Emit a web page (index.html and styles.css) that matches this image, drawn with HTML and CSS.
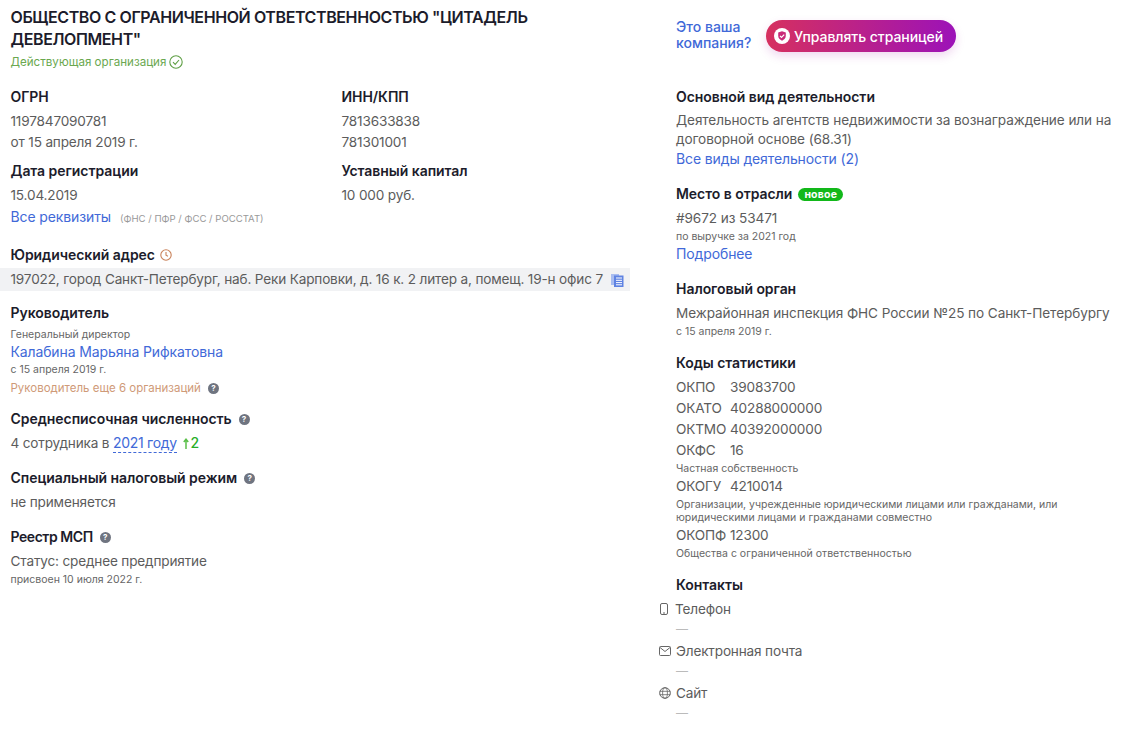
FILE: index.html
```html
<!DOCTYPE html>
<html lang="ru">
<head>
<meta charset="utf-8">
<title>Цитадель Девелопмент</title>
<link rel="stylesheet" href="styles.css">
</head>
<body>
<div class="page">
  <main class="left">
    <h1 class="title">ОБЩЕСТВО С ОГРАНИЧЕННОЙ ОТВЕТСТВЕННОСТЬЮ "ЦИТАДЕЛЬ ДЕВЕЛОПМЕНТ"</h1>
    <div class="status">Действующая организация
      <svg class="ic-check" viewBox="0 0 14 14" width="14" height="14"><circle cx="7" cy="7" r="6.200" fill="none" stroke="#5f9f45" stroke-width="1.100"/><path d="M4 7.200l2.200 2.200 3.800-4.400" fill="none" stroke="#5f9f45" stroke-width="1.100"/></svg>
    </div>
    <div class="req-grid">
      <div class="req">
        <div class="h">ОГРН</div>
        <div class="v">1197847090781</div>
        <div class="v">от 15 апреля 2019 г.</div>
      </div>
      <div class="req">
        <div class="h">ИНН/КПП</div>
        <div class="v">7813633838</div>
        <div class="v">781301001</div>
      </div>
      <div class="req">
        <div class="h">Дата регистрации</div>
        <div class="v">15.04.2019</div>
      </div>
      <div class="req">
        <div class="h">Уставный капитал</div>
        <div class="v">10 000 руб.</div>
      </div>
    </div>
    <div class="v"><a class="link" href="#">Все реквизиты</a><span class="src">(ФНС / ПФР / ФСС / РОССТАТ)</span></div>

    <section class="sec sec-addr">
      <div class="h">Юридический адрес
        <svg class="ic-clock" viewBox="0 0 12 12" width="12" height="12"><circle cx="6" cy="6" r="5.200" fill="none" stroke="#c9825a" stroke-width="1.100"/><path d="M6 3v3.200l2 1" fill="none" stroke="#c9825a" stroke-width="1.100"/></svg>
      </div>
      <div class="addr"><span class="addr-text">197022, город Санкт-Петербург, наб. Реки Карповки, д. 16 к. 2 литер а, помещ. 19-н офис 7</span>
        <svg class="ic-copy" viewBox="0 0 13 14" width="13" height="14"><path d="M0 1h8v11H0z" fill="#a9bdf0"/><path d="M3 2.500h9.500V14H3z" fill="#5f83e2"/><path d="M5 5h6M5 7.300h6M5 9.600h6M5 11.800h6" stroke="#fff" stroke-width="1"/></svg>
      </div>
    </section>

    <section class="sec sec-boss">
      <div class="h">Руководитель</div>
      <div class="small boss-role">Генеральный директор</div>
      <a class="link boss-name" href="#">Калабина Марьяна Рифкатовна</a>
      <div class="small">с 15 апреля 2019 г.</div>
      <div class="other">Руководитель еще 6 организаций <span class="q q-mid">?</span></div>
    </section>

    <section class="sec sec-a">
      <div class="h">Среднесписочная численность <span class="q">?</span></div>
      <div class="v staff">4 сотрудника в <a class="link dash" href="#">2021 году</a> <span class="delta"><svg class="ic-up" viewBox="0 0 6 11" width="6" height="11"><path d="M3 11V2M.8 4L3 1.200 5.200 4" fill="none" stroke="#5bbf4a" stroke-width="1.500"/></svg>2</span></div>
    </section>

    <section class="sec sec-tax">
      <div class="h">Специальный налоговый режим <span class="q">?</span></div>
      <div class="v">не применяется</div>
    </section>

    <section class="sec">
      <div class="h"><span class="h-narrow">Реестр МСП</span> <span class="q">?</span></div>
      <div class="v">Статус: среднее предприятие</div>
      <div class="small tight">присвоен 10 июля 2022 г.</div>
    </section>
  </main>

  <aside class="right">
    <div class="claim">
      <a class="claim-q" href="#">Это ваша<br>компания?</a>
      <a class="btn" href="#">
        <svg class="ic-shield" viewBox="0 0 16 16" width="16" height="16"><circle cx="8" cy="8" r="8" fill="#fff"/><path d="M8 3.300l3.800 1.300v3.200c0 2.400-1.600 4-3.800 4.900-2.200-.9-3.800-2.500-3.800-4.900V4.600z" fill="#c92b78"/><path d="M6 7.900l1.500 1.500L10.200 6.600" fill="none" stroke="#fff" stroke-width="1.200"/></svg>
        Управлять страницей
      </a>
    </div>

    <section class="rsec rsec-first">
      <div class="h">Основной вид деятельности</div>
      <div class="v lh19">Деятельность агентств недвижимости за вознаграждение или на договорной основе (68.31)</div>
      <a class="link lh19 block" href="#">Все виды деятельности (2)</a>
    </section>

    <section class="rsec">
      <div class="h">Место в отрасли <span class="badge">новое</span></div>
      <div class="v">#9672 из 53471</div>
      <div class="small tight">по выручке за 2021 год</div>
      <a class="link block more" href="#">Подробнее</a>
    </section>

    <section class="rsec rsec-tax">
      <div class="h">Налоговый орган</div>
      <div class="v">Межрайонная инспекция ФНС России №25 по Санкт-Петербургу</div>
      <div class="small tight">с 15 апреля 2019 г.</div>
    </section>

    <section class="rsec rsec-narrow">
      <div class="h">Коды статистики</div>
      <div class="code"><span class="code-k">ОКПО</span><span>39083700</span></div>
      <div class="code"><span class="code-k">ОКАТО</span><span>40288000000</span></div>
      <div class="code"><span class="code-k">ОКТМО</span><span>40392000000</span></div>
      <div class="code"><span class="code-k">ОКФС</span><span>16</span></div>
      <div class="small tight">Частная собственность</div>
      <div class="code"><span class="code-k">ОКОГУ</span><span>4210014</span></div>
      <div class="small note">Организации, учрежденные юридическими лицами или гражданами, или юридическими лицами и гражданами совместно</div>
      <div class="code"><span class="code-k">ОКОПФ</span><span>12300</span></div>
      <div class="small tight">Общества с ограниченной ответственностью</div>
    </section>

    <section class="rsec rsec-narrow">
      <div class="h">Контакты</div>
      <div class="contact">
        <div class="contact-row row-phone"><svg viewBox="0 0 8 12" width="8" height="12"><rect x="0.500" y="0.500" width="7" height="11" rx="1.500" fill="none" stroke="#666" stroke-width="1"/><path d="M3 10h2" stroke="#666"/></svg>Телефон</div>
        <div class="dashv">—</div>
      </div>
      <div class="contact">
        <div class="contact-row"><svg viewBox="0 0 12 10" width="12" height="10"><rect x="0.500" y="0.500" width="11" height="9" rx="1" fill="none" stroke="#666" stroke-width="1"/><path d="M1 1.500l5 4 5-4" fill="none" stroke="#666" stroke-width="1"/></svg>Электронная почта</div>
        <div class="dashv">—</div>
      </div>
      <div class="contact">
        <div class="contact-row"><svg viewBox="0 0 12 12" width="12" height="12"><circle cx="6" cy="6" r="5.300" fill="none" stroke="#666" stroke-width="1"/><ellipse cx="6" cy="6" rx="2.400" ry="5.300" fill="none" stroke="#666" stroke-width="0.800"/><path d="M.7 4.300h10.600M.7 7.700h10.600" stroke="#666" stroke-width="0.800"/></svg>Сайт</div>
        <div class="dashv">—</div>
      </div>
    </section>
  </aside>
</div>
</body>
</html>
```

FILE: styles.css
```css
* { box-sizing: border-box; }
html, body { margin: 0; padding: 0; background: #fff; }
body {
  font-family: Inter, "Noto Sans", "Liberation Sans", sans-serif;
  font-size: 13.600px;
  letter-spacing: -0.170px;
  color: #5c5c5c;
}
a { text-decoration: none; }
.page {
  display: grid;
  grid-template-columns: 630px 1fr;
  column-gap: 46px;
  height: 732px;
  overflow: hidden;
}
.left { padding: 6px 0 0 10.500px; }
.right { padding: 19px 0 0 0; min-width: 0; }
.right .v { letter-spacing: -0.090px; }

.title {
  margin: 0;
  font-size: 16px;
  line-height: 22px;
  font-weight: 600;
  color: #1c1c2b;
  letter-spacing: -0.400px;
}
.status {
  margin-top: 4px;
  font-size: 11.600px;
  letter-spacing: 0;
  line-height: 16px;
  color: #6aa84f;
  display: flex;
  align-items: center;
  gap: 3px;
}
.req-grid {
  display: grid;
  grid-template-columns: 331px 1fr;
  row-gap: 8px;
  margin-top: 17px;
}
.h {
  font-size: 14px;
  letter-spacing: -0.050px;
  line-height: 20px;
  font-weight: 600;
  color: #1c1c2b;
  display: flex;
  align-items: center;
  gap: 5px;
  margin-bottom: 4px;
}
.h-narrow { letter-spacing: -0.450px; }
.v { line-height: 21px; color: #5c5c5c; }
.link { color: #4169d8; font-size: 14px; letter-spacing: -0.120px; }
.block { display: block; }
.v.lh19, .lh19 { line-height: 19px; }
.src { font-size: 9.600px; letter-spacing: 0; color: #999; margin-left: 9px; }
.small { font-size: 10.500px; letter-spacing: 0; line-height: 16px; color: #666; }
.tight { line-height: 14px; margin-top: 1px; }
.note { line-height: 13px; margin: 0.500px 0 1px; }

.sec { margin-top: 14px; }
.sec-addr { margin-top: 16px; margin-left: -10.500px; }
.sec-addr .h { margin-left: 10.500px; margin-bottom: 3px; }
.sec-boss { margin-top: 12px; }
.boss-role { line-height: 15px; }
.sec-a { margin-top: 11px; }
.sec-tax { margin-top: 15px; }
.addr {
  height: 23px;
  background: #f1f2f4;
  padding-left: 10.500px;
  display: flex;
  align-items: center;
  gap: 8px;
  line-height: 23px;
}
.addr-text { white-space: nowrap; }
.boss-name { display: block; line-height: 20px; }
.other {
  font-size: 11.500px;
  letter-spacing: 0;
  line-height: 20px;
  color: #cf9a78;
  display: flex;
  align-items: center;
  gap: 7px;
}
.q {
  display: inline-block;
  width: 11px;
  height: 11px;
  border-radius: 50%;
  background: #6f7480;
  color: #fff;
  font-size: 8px;
  line-height: 11px;
  font-weight: 700;
  text-align: center;
  margin-left: 2px;
}
.q-mid { margin-left: 0; }
.staff { height: 20px; line-height: 20px; }
.dash { border-bottom: 1px dashed #4169d8; padding-bottom: 1px; margin: 0 3px 0 0; letter-spacing: -0.300px; }
.delta { color: #27ae27; font-size: 14px; font-weight: 500; }
.ic-up { margin-right: 1px; vertical-align: -1px; }

.claim { display: flex; align-items: flex-start; gap: 14px; }
.claim-q {
  font-size: 14px;
  letter-spacing: 0;
  line-height: 16px;
  font-weight: 500;
  color: #4169d8;
  width: 76px;
}
.btn {
  width: 190px;
  height: 32px;
  margin-top: 1px;
  border-radius: 16px;
  background: linear-gradient(90deg, #d6305f 0%, #9c12b8 100%);
  box-shadow: 0 4px 10px rgba(170, 40, 170, 0.180);
  color: #fff;
  font-size: 14px;
  letter-spacing: -0.050px;
  font-weight: 500;
  display: flex;
  align-items: center;
  gap: 4px;
  padding-left: 8px;
  white-space: nowrap;
}
.rsec { margin-top: 16px; }
.rsec-first { margin-top: 35px; }
.rsec-tax { margin-top: 17px; }
.rsec-narrow { margin-top: 14px; }
.more { padding-top: 1px; }
.badge {
  background: #12b81a;
  color: #fff;
  font-size: 10.500px;
  font-weight: 700;
  line-height: 13px;
  height: 13px;
  padding: 0 6px;
  border-radius: 7px;
  letter-spacing: 0.2px;
  margin-left: 1px;
}
.code { display: flex; line-height: 21px; }
.code-k { width: 54px; flex: none; }
.contact { margin-bottom: 4px; }
.contact-row {
  display: flex;
  align-items: center;
  gap: 5px;
  margin-left: -17px;
  line-height: 21px;
}
.row-phone { margin-left: -16px; gap: 7px; }
.dashv { line-height: 17px; color: #bbb; font-size: 12px; }
```
